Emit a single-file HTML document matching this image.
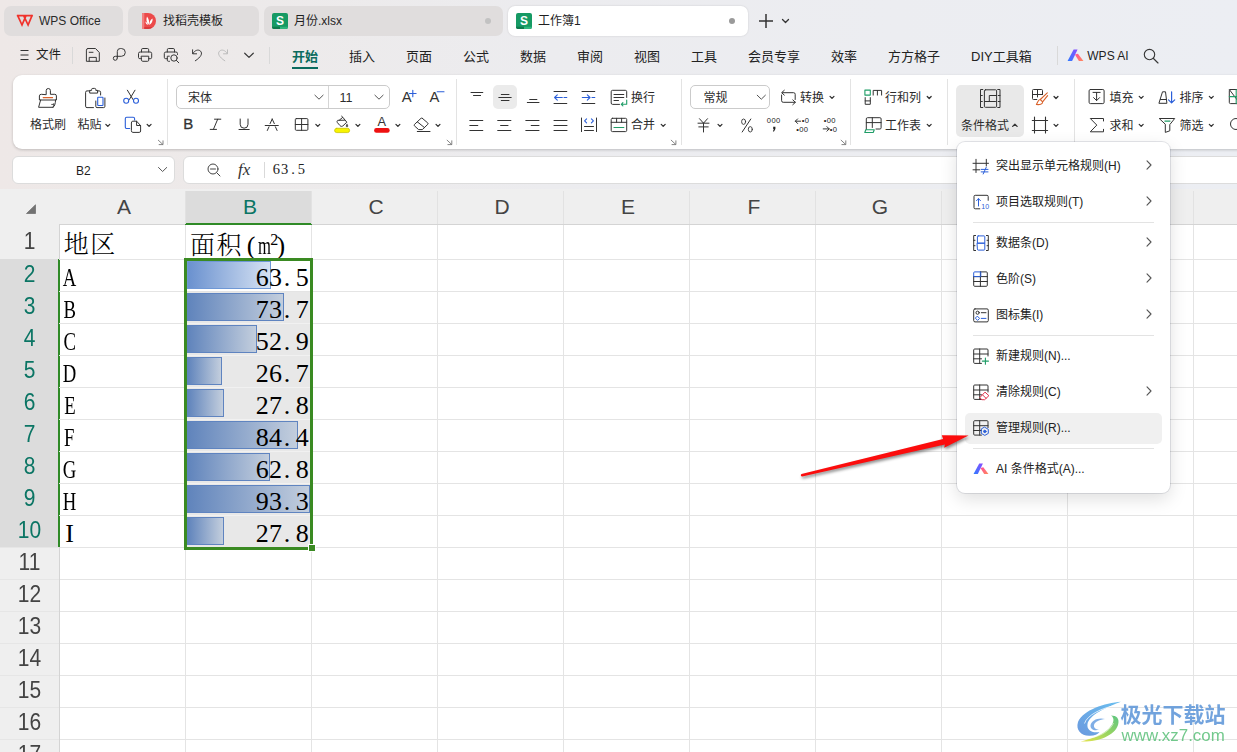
<!DOCTYPE html>
<html lang="zh"><head><meta charset="utf-8"><title>WPS</title>
<style>
html,body{margin:0;padding:0}
body{width:1237px;height:752px;overflow:hidden;position:relative;background:#f0eeee;font-family:"Liberation Sans","Noto Sans CJK SC",sans-serif;font-size:12px;color:#1f1f1f}
div,span,svg{position:absolute;box-sizing:border-box}
.t{white-space:nowrap;line-height:1}
svg{overflow:visible}
.tab{top:6px;height:30px;border-radius:7px;background:#e0dddd}
.sep{width:1px;background:#d9d9d9}
.ic{fill:none;stroke:#383838;stroke-width:1;stroke-linecap:round;stroke-linejoin:round}
.mt{top:49.800px;font-size:13px;color:#222}
.rl{font-size:12px;color:#2b2b2b}
.hd{font-size:21px;color:#505050;text-align:center}
.cell{font-family:"Liberation Serif","Noto Serif CJK SC",serif;font-size:26.500px;font-weight:300;color:#000;white-space:nowrap;line-height:1}
.d{position:static;display:inline-flex;justify-content:center;width:13.330px;font-size:26px;font-weight:400}
.nl{position:static;display:inline-block;transform:scaleX(.72)}
.mi{font-size:12px;color:#222;left:39px}
</style></head><body>
<div style="left:0;top:0;width:1237px;height:192px;background:linear-gradient(90deg,#eee8e7 0,#edeaea 250px,#ececef 550px,#eceef3 100%)"></div>
<div class="tab" style="left:4px;width:119px"></div><div class="tab" style="left:128px;width:131px"></div><div class="tab" style="left:264px;width:239px"></div><div class="tab" style="left:508px;width:240px;background:#fff;box-shadow:0 0 2px rgba(0,0,0,.15)"></div>
<svg style="left:0;top:0" width="40" height="40"><path d="M17.700 15.700 H32 M17.700 15.700 L22 25 L25.700 16.300 M24 16.300 L28.100 25 L32 15.700" fill="none" stroke="#f0322b" stroke-width="1.700" stroke-linejoin="miter" stroke-linecap="square"/></svg><span class="t" style="left:39px;top:14.800px;font-size:12px;color:#2a2a2a">WPS Office</span>
<svg style="left:142px;top:13px" width="14" height="16" viewBox="0 0 14 16"><path d="M1 0 H6 A8 8 0 0 1 14 8 A8 8 0 0 1 6 16 H0 V1 A1 1 0 0 1 1 0Z" fill="#ec4a4a"/><path d="M0 1 A1 1 0 0 1 1 0 H2.300 V16 H0Z" fill="#f27f7e"/><path d="M2.300 14 H10.500 C9.500 15.200 7.800 16 6 16 H2.300Z" fill="#d93a3c"/><path d="M6.600 11.800 C4.200 9.500 4 6.500 5 3.600 C7 6 7.600 9 6.600 11.800Z M7.300 12 C7.300 9 8.500 6.600 10.600 5.600 C10.800 8.400 9.800 10.800 7.300 12Z M5.900 12 C4.500 11.600 3.600 10.300 3.400 8.600 C4.600 9.200 5.600 10.400 5.900 12Z" fill="#fff"/></svg><span class="t" style="left:163px;top:14.800px;font-size:12px">找稻壳模板</span>
<svg style="left:272px;top:13px" width="16" height="16" viewBox="0 0 16 16"><rect x="0" y="0" width="16" height="16" rx="2" fill="#169a64"/><path d="M0 13.700 H8 V16 H2 A2 2 0 0 1 0 14Z" fill="#0d7a4c"/><path d="M8 13.700 H16 V14 A2 2 0 0 1 14 16 H8Z" fill="#2fb57c"/><text x="8" y="12" font-family="Liberation Sans,sans-serif" font-weight="bold" font-size="12" fill="#fff" text-anchor="middle">S</text></svg><span class="t" style="left:294px;top:14.800px;font-size:12px">月份.xlsx</span><div style="left:485px;top:18px;width:6px;height:6px;border-radius:3px;background:#c2c2c2"></div>
<svg style="left:516px;top:13px" width="16" height="16" viewBox="0 0 16 16"><rect x="0" y="0" width="16" height="16" rx="2" fill="#169a64"/><path d="M0 13.700 H8 V16 H2 A2 2 0 0 1 0 14Z" fill="#0d7a4c"/><path d="M8 13.700 H16 V14 A2 2 0 0 1 14 16 H8Z" fill="#2fb57c"/><text x="8" y="12" font-family="Liberation Sans,sans-serif" font-weight="bold" font-size="12" fill="#fff" text-anchor="middle">S</text></svg><span class="t" style="left:538px;top:14.800px;font-size:12px">工作簿1</span><div style="left:729px;top:18px;width:6px;height:6px;border-radius:3px;background:#9a9a9a"></div>
<svg style="left:758px;top:13px" width="16" height="16"><path d="M8 1 V15 M1 8 H15" stroke="#333" stroke-width="1.5" fill="none"/></svg><svg style="left:782px;top:19px" width="7" height="4.5"><path d="M0.5 0.5 L3.5 3.5 L6.5 0.5" fill="none" stroke="#333" stroke-width="1.3" stroke-linecap="round" stroke-linejoin="round"/></svg>
<svg style="left:20px;top:49px" width="11" height="12"><path d="M0.5 1.5 H8.5 M0.5 6 H8.5 M0.5 10.5 H8.5" stroke="#333" stroke-width="1.1" fill="none"/></svg><span class="t" style="left:36px;top:49px;font-size:12.5px">文件</span><div class="sep" style="left:72px;top:47px;height:17px"></div>
<svg class="ic" style="left:0;top:40px" width="270" height="32" viewBox="0 40 270 32"><path d="M88 48.500 H95.500 L99.300 52.500 V61.300 H86.400 V50.100 A1.600 1.600 0 0 1 88 48.500 Z M89.200 52.300 H93 M89.200 61.300 V57.400 H96.300 V61.300"/><path d="M117.300 58 V51.600 A3.100 3.100 0 0 1 120.400 48.500 H121.400 A3.900 3.900 0 0 1 121.400 56.300 H117.300 M117.300 58 A2 2 0 1 1 115.300 56.300 H117.300"/><path d="M141.500 52 V49.800 A1.300 1.300 0 0 1 142.800 48.500 H147.400 A1.300 1.300 0 0 1 148.700 49.800 V52 M141.500 58.700 H139.900 A1.400 1.400 0 0 1 138.500 57.300 V53.600 A1.600 1.600 0 0 1 140.100 52 H150.100 A1.600 1.600 0 0 1 151.700 53.600 V57.300 A1.400 1.400 0 0 1 150.300 58.700 H148.700 M141.500 56.200 H148.700 V60.200 A1.100 1.100 0 0 1 147.600 61.300 H142.600 A1.100 1.100 0 0 1 141.500 60.200 Z"/><path d="M167.300 52 V49.800 A1.300 1.300 0 0 1 168.600 48.500 H173.200 A1.300 1.300 0 0 1 174.500 49.800 V52 M167.300 58.700 H165.700 A1.400 1.400 0 0 1 164.300 57.300 V53.600 A1.600 1.600 0 0 1 165.900 52 H175.900 A1.600 1.600 0 0 1 177.500 53.600 V54.500 M169.300 56.200 H167.300 V60.200 A1.100 1.100 0 0 0 168.400 61.300 H169.500 M177.200 58 A3.200 3.200 0 1 1 170.800 58 A3.200 3.200 0 1 1 177.200 58 Z M176.400 60.400 L178.800 62.800"/><path d="M192.600 49.800 V53.800 H196.600 M192.900 53.600 C194.500 50.200 198.500 49 200.600 51.200 C202.600 53.400 201.400 56.800 195.300 60.800"/><path d="M227.500 49.800 V53.800 H223.500 M227.200 53.600 C225.600 50.200 221.600 49 219.500 51.200 C217.500 53.400 218.700 56.800 224.800 60.800" stroke="#bdbdbd"/><path d="M244.700 53.200 L249 57.400 L253.300 53.200" stroke-width="1.200"/></svg><div class="sep" style="left:269px;top:47px;height:17px"></div>
<span class="t mt" style="left:292px;color:#0b6b5e;font-weight:bold">开始</span><span class="t mt" style="left:349px">插入</span><span class="t mt" style="left:406px">页面</span><span class="t mt" style="left:463px">公式</span><span class="t mt" style="left:520px">数据</span><span class="t mt" style="left:577px">审阅</span><span class="t mt" style="left:634px">视图</span><span class="t mt" style="left:691px">工具</span><span class="t mt" style="left:748px">会员专享</span><span class="t mt" style="left:831px">效率</span><span class="t mt" style="left:888px">方方格子</span><span class="t mt" style="left:971px">DIY工具箱</span><div style="left:292px;top:67px;width:26px;height:2px;background:#0b6b5e"></div>
<div class="sep" style="left:1057px;top:46px;height:19px"></div><svg style="left:1066.500px;top:48.500px" width="17" height="12.500" viewBox="0 0 18 14" preserveAspectRatio="none"><defs><linearGradient id="aj1" x1="0" y1="1" x2="1" y2="0"><stop offset="0" stop-color="#2f7bff"/><stop offset="1" stop-color="#8a4dff"/></linearGradient><linearGradient id="aj2" x1="0" y1="0" x2="1" y2="1"><stop offset="0" stop-color="#ff4d9a"/><stop offset="1" stop-color="#ff8a5c"/></linearGradient></defs><path d="M7 0.500 H11.200 L5.400 13.500 H0.600 Z" fill="url(#aj1)"/><path d="M8.400 6.200 L11.600 5.200 L17.400 13.500 H12.600 Z" fill="url(#aj2)"/></svg><span class="t" style="left:1087.300px;top:49.500px;font-size:12px">WPS AI</span><svg class="ic" style="left:1142.500px;top:47.500px;stroke-width:1.150" width="16" height="16"><circle cx="6.5" cy="6.5" r="5.2"/><path d="M10.5 10.5 L15 15"/></svg>
<div style="left:13px;top:75px;width:1300px;height:74px;border-radius:9px;background:#fff;box-shadow:0 1px 3px rgba(0,0,0,.2)"></div>
<div class="sep" style="left:167px;top:79px;height:66px;background:#e3e3e3"></div><div class="sep" style="left:456px;top:79px;height:66px;background:#e3e3e3"></div><div class="sep" style="left:681px;top:79px;height:66px;background:#e3e3e3"></div><div class="sep" style="left:850px;top:79px;height:66px;background:#e3e3e3"></div><div class="sep" style="left:947px;top:79px;height:66px;background:#e3e3e3"></div><div class="sep" style="left:1074px;top:79px;height:66px;background:#e3e3e3"></div>
<div style="left:493px;top:85px;width:24px;height:24px;border-radius:5px;background:#ebebeb"></div><div style="left:956px;top:85px;width:68px;height:52px;border-radius:5px;background:#e9e9e9"></div><div style="left:176px;top:85px;width:214px;height:24px;border:1px solid #cbcbcb;border-radius:5px;background:#fff"></div><div class="sep" style="left:328px;top:86px;height:22px;background:#d5d5d5"></div><div style="left:690px;top:85px;width:80px;height:24px;border:1px solid #cbcbcb;border-radius:5px;background:#fff"></div>
<svg style="left:0;top:0" width="1237" height="152" viewBox="0 0 1237 152" stroke-linecap="round" stroke-linejoin="round"><path d="M46.2 94.3 V90.6 A2.1 2.1 0 0 1 50.4 90.6 V94.3 H54.8 A1.6 1.6 0 0 1 56.4 95.9 V100 H39.4 V95.9 A1.6 1.6 0 0 1 41 94.3 Z" stroke="#333" stroke-width="1.0" fill="none"/><path d="M40.6 100 L38.6 107.3 H53 C54.6 106.6 55.4 103.5 55.6 100 M53 107.3 C53.6 106 53.9 105 54 103.8 C53.2 104.4 52.4 104.6 51.8 104.5" stroke="#333" stroke-width="1.0" fill="none"/><path d="M43.2 97.6 H52.6" stroke="#d9622b" stroke-width="1.1" fill="none"/><path d="M89.6 90.9 H87 A1.4 1.4 0 0 0 85.6 92.3 V106.2 A1.4 1.4 0 0 0 87 107.600 H93.5 M97.6 90.9 H99.2 A1.4 1.4 0 0 1 100.6 92.3 V95 M89.7 92.7 V90.4 H91.6 V89.6 A1.2 1.2 0 0 1 92.8 88.4 H94.600 A1.2 1.2 0 0 1 95.8 89.6 V90.4 H97.600 V92.7 Z" stroke="#333" stroke-width="1.0" fill="none"/><path d="M95.8 101 V106.400 A1.2 1.2 0 0 0 97 107.600 H103.7 A1.2 1.2 0 0 0 104.9 106.400 V98" stroke="#333" stroke-width="1.0" fill="none"/><path d="M98.2 97.3 H102.500 A.5 .5 0 0 1 103 97.800 V105 A.5 .5 0 0 1 102.500 105.500 H98.2 A.5 .5 0 0 1 97.700 105 V97.800 A.5 .5 0 0 1 98.2 97.3Z" stroke="#2b5fd9" stroke-width="1.1" fill="none"/><path d="M127.400 90.200 L133 99.500 M135 90.200 L129.400 99.500" stroke="#333" stroke-width="1.0" fill="none"/><path d="M128.700 100.800 A2.500 2.500 0 1 1 123.700 100.800 A2.500 2.500 0 1 1 128.700 100.800 Z M138.500 100.800 A2.500 2.500 0 1 1 133.500 100.800 A2.500 2.500 0 1 1 138.500 100.800 Z" stroke="#2b5fd9" stroke-width="1.1" fill="none"/><path d="M129.700 128.500 H126.700 A1.4 1.4 0 0 1 125.300 127.100 V118.700 A1.4 1.4 0 0 1 126.700 117.300 H133.200 A1.4 1.4 0 0 1 134.600 118.700 V120" stroke="#2b5fd9" stroke-width="1.1" fill="none"/><path d="M131.400 122.600 A1.4 1.4 0 0 1 132.800 121.200 H136.600 L140.600 125.600 V131 A1.4 1.4 0 0 1 139.200 132.400 H132.800 A1.4 1.4 0 0 1 131.400 131 Z M136.600 121.200 V125.500 H140.600" stroke="#333" stroke-width="1.0" fill="none"/><path d="M105.85 124.40 L107.80 126.40 L109.75 124.40" stroke="#333" stroke-width="1.3" fill="none"/><path d="M147.15 124.40 L149.10 126.40 L151.05 124.40" stroke="#333" stroke-width="1.3" fill="none"/><path d="M158.3 140.2 L162.8 144.39999999999998 M163.0 140.79999999999998 V144.6 H159.10000000000002" stroke="#777" stroke-width="0.9" fill="none"/><path d="M314.9 95.2 L319.0 99.2 L323.09999999999997 95.2" stroke="#555" stroke-width="1.0" fill="none"/><path d="M374.9 95.2 L379.0 99.2 L383.09999999999997 95.2" stroke="#555" stroke-width="1.0" fill="none"/><path d="M412.800 90.3 V96.700 M409.500 93.500 H416.100" stroke="#2b5fd9" stroke-width="1.1" fill="none"/><path d="M437.200 91.800 H444" stroke="#2b5fd9" stroke-width="1.1" fill="none"/><path d="M214.500 119.2 H220.800 M210.200 129.400 H216.500 M217.700 119.2 L213.400 129.400" stroke="#333" stroke-width="1.0" fill="none"/><path d="M240.200 119 V124.300 A3.9 3.9 0 0 0 248 124.300 V119 M239 129.500 H249.200" stroke="#333" stroke-width="1.0" fill="none"/><path d="M272.2 119 L270.100 123.600 M272.2 119 L274.300 123.600 M265.2 125.500 H278.300 M269 126.800 L267.300 130.500 M275.400 126.800 L277.100 130.500" stroke="#333" stroke-width="1.0" fill="none"/><path d="M296.300 118.600 H306.900 A1 1 0 0 1 307.900 119.600 V129.300 A1 1 0 0 1 306.900 130.300 H296.300 A1 1 0 0 1 295.300 129.300 V119.600 A1 1 0 0 1 296.300 118.600 Z M301.600 118.600 V130.300 M295.300 124.500 H307.900" stroke="#333" stroke-width="1.0" fill="none"/><path d="M315.85 124.40 L317.80 126.40 L319.75 124.40" stroke="#333" stroke-width="1.3" fill="none"/><path d="M339.500 120 L342.800 117.300 L346.800 122.200 L343 125.800 C342 126.600 340.800 126.600 340 125.600 L337.400 122.600 C336.800 121.700 337 120.800 337.800 120.300 L344.500 120.200 M342.800 117.300 L341.600 116.200" stroke="#333" stroke-width="1.0" fill="none"/><path d="M347 124.300 C347.600 125.200 347.800 125.700 347.800 126.100 A.8 .8 0 0 1 346.200 126.100 C346.200 125.700 346.400 125.200 347 124.300Z" stroke="#333" stroke-width="0.5" fill="#333"/><rect x="334.600" y="128.300" width="15" height="4.300" rx="2.15" fill="#f8f400" stroke="#c9c400" stroke-width=".8"/><path d="M355.95 124.40 L357.90 126.40 L359.85 124.40" stroke="#333" stroke-width="1.3" fill="none"/><rect x="374.100" y="128.100" width="15.600" height="4.600" rx="2.3" fill="#ee1111"/><path d="M395.95 124.40 L397.90 126.40 L399.85 124.40" stroke="#333" stroke-width="1.3" fill="none"/><path d="M422.300 118.300 L427.800 123 C428.200 123.400 428.200 123.900 427.800 124.300 L422.300 129.600 H418.600 L414.400 125.800 C414 125.400 414 124.900 414.400 124.500 L421 118.300 C421.400 118 421.900 118 422.300 118.300 Z M417.300 121.800 L424.500 127.600 M417.300 131.500 H430" stroke="#333" stroke-width="1.0" fill="none"/><path d="M436.05 124.40 L438.00 126.40 L439.95 124.40" stroke="#333" stroke-width="1.3" fill="none"/><path d="M447.1 140.2 L451.6 144.39999999999998 M451.8 140.79999999999998 V144.6 H447.90000000000003" stroke="#777" stroke-width="0.9" fill="none"/><path d="M471 92.500 H482.800 M473.500 95.500 H480.600" stroke="#333" stroke-width="1.0" fill="none"/><path d="M501.300 94.500 H509 M498.800 97.500 H511.200 M501.300 100.500 H509" stroke="#333" stroke-width="1.0" fill="none"/><path d="M529.700 99.500 H536.900 M527.300 102.500 H539" stroke="#333" stroke-width="1.0" fill="none"/><path d="M554 91.500 H566.800 M554 103.500 H566.800" stroke="#333" stroke-width="1.0" fill="none"/><path d="M554.600 97.500 H562.300 M557.300 94.800 L554.600 97.500 L557.300 100.200 M564 97.500 H566.800" stroke="#2b5fd9" stroke-width="1.1" fill="none"/><path d="M582 91.500 H594.800 M582 103.500 H594.800" stroke="#333" stroke-width="1.0" fill="none"/><path d="M582.300 97.500 H590 M587.300 94.800 L590 97.500 L587.300 100.200 M592 97.500 H594.800" stroke="#2b5fd9" stroke-width="1.1" fill="none"/><path d="M619.500 104.400 H612.600 A1.4 1.4 0 0 1 611.200 103 V91.700 A1.4 1.4 0 0 1 612.600 90.300 H625.300 A1.4 1.4 0 0 1 626.700 91.700 V97.500 M614 94.500 H623.800 M614 97.500 H623.800 M614 100.500 H618.500" stroke="#333" stroke-width="1.0" fill="none"/><path d="M626.700 100 V104.300 H621.300 M622.900 102.700 L621.300 104.300 L622.900 105.900" stroke="#1f9d67" stroke-width="1.1" fill="none"/><path d="M469.800 120.500 H482.800 M469.800 125.500 H477.800 M469.800 130.500 H482.800" stroke="#333" stroke-width="1.0" fill="none"/><path d="M497.700 120.500 H510.900 M500.600 125.500 H508 M497.700 130.500 H510.900" stroke="#333" stroke-width="1.0" fill="none"/><path d="M525.800 120.500 H539 M531.200 125.500 H539 M525.800 130.500 H539" stroke="#333" stroke-width="1.0" fill="none"/><path d="M554 120.500 H567 M554 125.500 H567 M554 130.500 H567" stroke="#333" stroke-width="1.0" fill="none"/><path d="M581.500 118 V131.600 M596.500 118 V131.600 M584.500 126.500 H593.500 M584.500 130.500 H593.500" stroke="#333" stroke-width="1.0" fill="none"/><path d="M586.600 118.800 L584.600 120.800 L586.600 122.800 M591.400 118.800 L593.400 120.800 L591.400 122.800" stroke="#2b5fd9" stroke-width="1.1" fill="none"/><path d="M612.400 118.300 H625.500 A1.2 1.2 0 0 1 626.700 119.500 V130.400 A1.2 1.2 0 0 1 625.500 131.600 H612.400 A1.2 1.2 0 0 1 611.200 130.400 V119.500 A1.2 1.2 0 0 1 612.400 118.300 Z M611.200 122.300 H626.700 M616.600 118.300 V122.300 M621.600 118.300 V122.300" stroke="#333" stroke-width="1.0" fill="none"/><path d="M614 127.500 H623.800" stroke="#1f9d67" stroke-width="1.2" fill="none"/><path d="M661.25 124.40 L663.20 126.40 L665.15 124.40" stroke="#333" stroke-width="1.3" fill="none"/><path d="M671.2 140.2 L675.7 144.39999999999998 M675.9000000000001 140.79999999999998 V144.6 H672.0" stroke="#777" stroke-width="0.9" fill="none"/><path d="M757.2 95.2 L761.3000000000001 99.2 L765.4000000000001 95.2" stroke="#555" stroke-width="1.0" fill="none"/><path d="M782.500 92.700 H793.600 A1.6 1.6 0 0 1 795.200 94.300 V99.500 M784.300 90.300 L781.600 92.700 L784.300 95.100 M781.600 95 V100.700 A1.6 1.6 0 0 0 783.200 102.300 H795.200 M792.800 99.900 L795.400 102.300 L792.800 104.700" stroke="#333" stroke-width="1.0" fill="none"/><path d="M830.05 96.40 L832.00 98.40 L833.95 96.40" stroke="#333" stroke-width="1.3" fill="none"/><path d="M699.500 118.700 L703.500 123.200 L707.500 118.700 M698 123.200 H709 M698.800 126.900 H708.200 M703.500 123.200 V132" stroke="#333" stroke-width="1.0" fill="none"/><path d="M718.05 124.40 L720.00 126.40 L721.95 124.40" stroke="#333" stroke-width="1.3" fill="none"/><path d="M750.800 119 L742.200 132" stroke="#333" stroke-width="1.0" fill="none"/><path d="M745.600 121.700 A2 2.700 0 1 1 741.600 121.700 A2 2.700 0 1 1 745.600 121.700 Z M752.300 129.300 A2 2.700 0 1 1 748.300 129.300 A2 2.700 0 1 1 752.300 129.300 Z" stroke="#333" stroke-width="0.9" fill="none"/><path d="M795.300 121.200 H800.600 M797.600 118.900 L795.300 121.200 L797.600 123.500" stroke="#333" stroke-width="1.0" fill="none"/><path d="M823.200 128.900 H829.200 M826.900 126.600 L829.200 128.900 L826.900 131.200" stroke="#333" stroke-width="1.0" fill="none"/><path d="M841.1 140.2 L845.6 144.39999999999998 M845.8000000000001 140.79999999999998 V144.6 H841.9" stroke="#777" stroke-width="0.9" fill="none"/><path d="M864.900 90.100 H870.300 V95.100 H864.900 Z" stroke="#1f9d67" stroke-width="1.1" fill="none"/><path d="M873.200 95.100 V90.400 H881.600 V95.100 M877.400 90.400 V95.100" stroke="#333" stroke-width="1.0" fill="none"/><path d="M865.200 97.600 V104.300 H870.300 V97.600 M865.200 100.900 H870.300" stroke="#333" stroke-width="1.0" fill="none"/><path d="M927.25 96.50 L929.20 98.50 L931.15 96.50" stroke="#333" stroke-width="1.3" fill="none"/><path d="M866.300 129.500 V118.900 A1.2 1.2 0 0 1 867.500 117.700 H879.900 A1.2 1.2 0 0 1 881.100 118.900 V127.800 A1.2 1.2 0 0 1 879.900 129 H876 M866.300 122.600 H881.100 M872.300 117.700 V127.500" stroke="#333" stroke-width="1.0" fill="none"/><path d="M865.800 129.700 H874.300 L873.200 132.500 H864.800 Z" stroke="#1f9d67" stroke-width="1.1" fill="none"/><path d="M927.25 124.40 L929.20 126.40 L931.15 124.40" stroke="#333" stroke-width="1.3" fill="none"/><path d="M982.800 89.500 H980.500 V107.500 H982.800 M997.700 89.500 H1000 V107.500 H997.700 M980.500 95.500 H982.300 M980.500 101.500 H982.300 M998.200 95.500 H1000 M998.200 101.500 H1000" stroke="#333" stroke-width="1.0" fill="none"/><path d="M985.400 89.800 H995.600 A1 1 0 0 1 996.600 90.800 V106.300 A1 1 0 0 1 995.600 107.300 H985.400 A1 1 0 0 1 984.400 106.300 V90.800 A1 1 0 0 1 985.400 89.800 Z M996.600 95.500 H989.300 V101.500 M984.400 101.500 H995.500" stroke="#333" stroke-width="1.0" fill="none"/><path d="M1012.700 126.400 L1014.900 124.300 L1017.100 126.400" stroke="#333" stroke-width="1.3" fill="none"/><path d="M1036.800 99.500 H1033.400 A.9 .9 0 0 1 1032.500 98.600 V90.400 A.9 .9 0 0 1 1033.400 89.500 H1041.600 A.9 .9 0 0 1 1042.500 90.400 V94.500 M1032.500 94.500 H1042.500 M1037.500 89.500 V97" stroke="#333" stroke-width="1.0" fill="none"/><path d="M1047.300 92.800 L1040.300 99.500 M1047.600 95.600 L1042.600 101.800 M1040.300 99.500 C1038.300 99.300 1038 101.800 1036.400 104.500 C1039.500 105 1043 104.200 1042.600 101.800 Z" stroke="#d9622b" stroke-width="1.1" fill="none"/><path d="M1054.05 96.50 L1056.00 98.50 L1057.95 96.50" stroke="#333" stroke-width="1.3" fill="none"/><path d="M1034.500 117.100 V132.900 M1045.500 117.100 V132.900 M1032.300 120.500 H1047.600 M1032.300 130.500 H1047.600" stroke="#333" stroke-width="1.1" fill="none"/><path d="M1054.05 124.40 L1056.00 126.40 L1057.95 124.40" stroke="#333" stroke-width="1.3" fill="none"/><path d="M1090.400 89.500 H1102.800 A1.3 1.3 0 0 1 1104.100 90.800 V102.300 A1.3 1.3 0 0 1 1102.800 103.600 H1090.400 A1.3 1.3 0 0 1 1089.100 102.300 V90.800 A1.3 1.3 0 0 1 1090.400 89.500 Z M1093 92.400 H1100.200 M1096.600 92.400 V100.500 M1093.600 97.600 L1096.600 100.600 L1099.600 97.600" stroke="#333" stroke-width="1.0" fill="none"/><path d="M1139.25 96.40 L1141.20 98.40 L1143.15 96.40" stroke="#333" stroke-width="1.3" fill="none"/><path d="M1162.900 91.800 H1165.500 L1166.900 103.300 H1159.300 Z M1160.500 99.500 H1166.300" stroke="#333" stroke-width="1.0" fill="none"/><path d="M1171.600 91.800 V102.600 M1168.500 99.800 L1171.600 102.900 L1174.700 99.800" stroke="#2b5fd9" stroke-width="1.2" fill="none"/><path d="M1209.35 96.40 L1211.30 98.40 L1213.25 96.40" stroke="#333" stroke-width="1.3" fill="none"/><path d="M1230.500 89.500 H1240 V103.600 H1230.500 A1.2 1.2 0 0 1 1229.300 102.400 V90.700 A1.2 1.2 0 0 1 1230.500 89.500 Z M1229.300 89.500 L1240 103.600" stroke="#333" stroke-width="1.0" fill="none"/><path d="M1229.300 96.600 H1240 M1236.200 89.500 V103.600" stroke="#1f9d67" stroke-width="1.1" fill="none"/><path d="M1103.500 121 V118.500 H1090.300 L1096.800 125.100 L1090.300 131.800 H1103.500 V129.300" stroke="#333" stroke-width="1.0" fill="none"/><path d="M1139.25 124.40 L1141.20 126.40 L1143.15 124.40" stroke="#333" stroke-width="1.3" fill="none"/><path d="M1159.600 118.500 H1174.700 L1169.800 124.600 V130.800 L1165.300 132.400 V124.600 Z" stroke="#333" stroke-width="1.0" fill="none"/><path d="M1164.900 121.100 H1170" stroke="#1f9d67" stroke-width="1.2" fill="none"/><path d="M1209.35 124.40 L1211.30 126.40 L1213.25 124.40" stroke="#333" stroke-width="1.3" fill="none"/><path d="M1241.500 124 A5.500 5.500 0 1 1 1230.500 124 A5.500 5.500 0 1 1 1241.500 124 Z" stroke="#333" stroke-width="1.0" fill="none"/></svg>
<span class="t rl" style="left:30px;top:119px;">格式刷</span><span class="t rl" style="left:77.5px;top:119px;">粘贴</span><span class="t rl" style="left:188px;top:92px;">宋体</span><span class="t rl" style="left:339.5px;top:91.5px;font-size:12.5px">11</span><span class="t" style="left:401.800px;top:89.600px;font-size:14.800px;color:#333">A</span><span class="t" style="left:429.600px;top:89.600px;font-size:14.800px;color:#333">A</span><span class="t" style="left:183.300px;top:116.200px;font-size:15px;color:#333;-webkit-text-stroke:.3px #333">B</span><span class="t" style="left:377.600px;top:115.600px;font-size:12.800px;color:#333">A</span><span class="t rl" style="left:631px;top:92px;">换行</span><span class="t rl" style="left:631px;top:119px;">合并</span><span class="t rl" style="left:703.5px;top:92px;">常规</span><span class="t rl" style="left:800px;top:92px;">转换</span><span class="t" style="left:766.800px;top:117.200px;font-size:7.600px;color:#222;letter-spacing:.4px">000</span><svg style="left:772px;top:126px" width="5" height="7"><path d="M1.2 0.800 H3.400 V3 L2 5.600 H0.900 L1.800 3 H1.2Z" fill="#222"/></svg><span class="t" style="left:801.800px;top:117.300px;font-size:7.600px;color:#222;letter-spacing:.3px">&#8226;0</span><span class="t" style="left:796.300px;top:125.600px;font-size:7.600px;color:#222;letter-spacing:.3px">&#8226;00</span><span class="t" style="left:823.800px;top:117.300px;font-size:7.600px;color:#222;letter-spacing:.3px">&#8226;00</span><span class="t" style="left:829.700px;top:125.600px;font-size:7.600px;color:#222;letter-spacing:.3px">&#8226;0</span><span class="t rl" style="left:885px;top:92px;">行和列</span><span class="t rl" style="left:885px;top:119.5px;">工作表</span><span class="t rl" style="left:961px;top:119.5px;">条件格式</span><span class="t rl" style="left:1109.5px;top:92px;">填充</span><span class="t rl" style="left:1179.5px;top:92px;">排序</span><span class="t rl" style="left:1109.5px;top:119.5px;">求和</span><span class="t rl" style="left:1179.5px;top:119.5px;">筛选</span>
<div style="left:12px;top:156px;width:162.500px;height:28px;border-radius:6px;background:#fff;border:1px solid #dcdcdc"></div><span class="t" style="left:76px;top:164.500px;font-size:12px">B2</span><svg style="left:158px;top:167px" width="10" height="6"><path d="M0.500 0.500 L4.600 4.500 L8.700 0.500" fill="none" stroke="#555" stroke-width="1" stroke-linecap="round" stroke-linejoin="round"/></svg><div style="left:183px;top:156px;width:1100px;height:28px;border-radius:6px;background:#fff;border:1px solid #dcdcdc"></div><svg class="ic" style="left:207px;top:163px;stroke:#444" width="15" height="15"><circle cx="6" cy="6" r="5"/><path d="M3.500 6 H8.500 M9.800 9.800 L13 13"/></svg><span class="t" style="left:238px;top:161px;font-size:17px;font-style:italic;font-family:'Liberation Serif',serif;color:#333">fx</span><div class="sep" style="left:264px;top:162px;height:16px;background:#d9d9d9"></div><span class="t" style="left:272.200px;top:162.300px;font-size:14.500px;font-family:'Liberation Serif',serif;color:#222"><span class="d" style="width:8.350px;font-size:14.500px">6</span><span class="d" style="width:8.350px;font-size:14.500px">3</span><span class="d" style="width:8.350px;font-size:14.500px">.</span><span class="d" style="width:8.350px;font-size:14.500px">5</span></span>
<div style="left:0;top:191px;width:1237px;height:561px;background:#fff"></div><div style="left:0;top:189px;width:1237px;height:35px;background:#efefef"></div><div style="left:0;top:189px;width:59px;height:563px;background:#efefef"></div><div style="left:185px;top:191px;width:127px;height:34px;background:#dcdcdc;border-bottom:2px solid #2f8a27"></div><div style="left:0;top:259px;width:60px;height:288px;background:#dcdcdc;border-right:2px solid #2f8a27"></div><svg style="left:26px;top:204px" width="10" height="10"><path d="M0.500 9.500 H9.500 V0.800 Z" fill="#727272" stroke="#727272" stroke-width=".8" stroke-linejoin="round"/></svg><span class="t hd" style="left:61px;top:196.200px;width:126px;color:#444">A</span><span class="t hd" style="left:187px;top:196.200px;width:126px;color:#0b7564">B</span><span class="t hd" style="left:313px;top:196.200px;width:126px;color:#444">C</span><span class="t hd" style="left:439px;top:196.200px;width:126px;color:#444">D</span><span class="t hd" style="left:565px;top:196.200px;width:126px;color:#444">E</span><span class="t hd" style="left:691px;top:196.200px;width:126px;color:#444">F</span><span class="t hd" style="left:817px;top:196.200px;width:126px;color:#444">G</span><span class="t hd" style="left:943px;top:196.200px;width:126px;color:#444">H</span><span class="t hd" style="left:1069px;top:196.200px;width:126px;color:#444">I</span><span class="t hd" style="left:1195px;top:196.200px;width:126px;color:#444">J</span>
<div style="left:59px;top:259px;width:1178px;height:1px;background:#e4e4e4"></div><div style="left:59px;top:291px;width:1178px;height:1px;background:#e4e4e4"></div><div style="left:59px;top:323px;width:1178px;height:1px;background:#e4e4e4"></div><div style="left:59px;top:355px;width:1178px;height:1px;background:#e4e4e4"></div><div style="left:59px;top:387px;width:1178px;height:1px;background:#e4e4e4"></div><div style="left:59px;top:419px;width:1178px;height:1px;background:#e4e4e4"></div><div style="left:59px;top:451px;width:1178px;height:1px;background:#e4e4e4"></div><div style="left:59px;top:483px;width:1178px;height:1px;background:#e4e4e4"></div><div style="left:59px;top:515px;width:1178px;height:1px;background:#e4e4e4"></div><div style="left:59px;top:547px;width:1178px;height:1px;background:#e4e4e4"></div><div style="left:59px;top:579px;width:1178px;height:1px;background:#e4e4e4"></div><div style="left:59px;top:611px;width:1178px;height:1px;background:#e4e4e4"></div><div style="left:59px;top:643px;width:1178px;height:1px;background:#e4e4e4"></div><div style="left:59px;top:675px;width:1178px;height:1px;background:#e4e4e4"></div><div style="left:59px;top:707px;width:1178px;height:1px;background:#e4e4e4"></div><div style="left:59px;top:739px;width:1178px;height:1px;background:#e4e4e4"></div><div style="left:59px;top:771px;width:1178px;height:1px;background:#e4e4e4"></div><div style="left:185px;top:225px;width:1px;height:527px;background:#e4e4e4"></div><div style="left:311px;top:225px;width:1px;height:527px;background:#e4e4e4"></div><div style="left:437px;top:225px;width:1px;height:527px;background:#e4e4e4"></div><div style="left:563px;top:225px;width:1px;height:527px;background:#e4e4e4"></div><div style="left:689px;top:225px;width:1px;height:527px;background:#e4e4e4"></div><div style="left:815px;top:225px;width:1px;height:527px;background:#e4e4e4"></div><div style="left:941px;top:225px;width:1px;height:527px;background:#e4e4e4"></div><div style="left:1067px;top:225px;width:1px;height:527px;background:#e4e4e4"></div><div style="left:1193px;top:225px;width:1px;height:527px;background:#e4e4e4"></div><div style="left:1319px;top:225px;width:1px;height:527px;background:#e4e4e4"></div><div style="left:185px;top:191px;width:1px;height:33px;background:#e2e2e2"></div><div style="left:311px;top:191px;width:1px;height:33px;background:#e2e2e2"></div><div style="left:437px;top:191px;width:1px;height:33px;background:#e2e2e2"></div><div style="left:563px;top:191px;width:1px;height:33px;background:#e2e2e2"></div><div style="left:689px;top:191px;width:1px;height:33px;background:#e2e2e2"></div><div style="left:815px;top:191px;width:1px;height:33px;background:#e2e2e2"></div><div style="left:941px;top:191px;width:1px;height:33px;background:#e2e2e2"></div><div style="left:1067px;top:191px;width:1px;height:33px;background:#e2e2e2"></div><div style="left:1193px;top:191px;width:1px;height:33px;background:#e2e2e2"></div><div style="left:1319px;top:191px;width:1px;height:33px;background:#e2e2e2"></div><div style="left:0;top:547px;width:59px;height:1px;background:#e6e6e6"></div><div style="left:0;top:579px;width:59px;height:1px;background:#e6e6e6"></div><div style="left:0;top:611px;width:59px;height:1px;background:#e6e6e6"></div><div style="left:0;top:643px;width:59px;height:1px;background:#e6e6e6"></div><div style="left:0;top:675px;width:59px;height:1px;background:#e6e6e6"></div><div style="left:0;top:707px;width:59px;height:1px;background:#e6e6e6"></div><div style="left:0;top:739px;width:59px;height:1px;background:#e6e6e6"></div><div style="left:0;top:771px;width:59px;height:1px;background:#e6e6e6"></div><div style="left:59px;top:224px;width:126px;height:1px;background:#d4d4d4"></div><div style="left:312px;top:224px;width:925px;height:1px;background:#d4d4d4"></div><div style="left:59px;top:225px;width:1px;height:34px;background:#d4d4d4"></div><div style="left:59px;top:547px;width:1px;height:205px;background:#d4d4d4"></div>
<span class="t hd" style="left:0;top:230.5px;width:59px;color:#444;transform:scaleY(1.1);transform-origin:50% 88%">1</span><span class="t hd" style="left:0;top:263.5px;width:59px;color:#0b7564;transform:scaleY(1.1);transform-origin:50% 88%">2</span><span class="t hd" style="left:0;top:295.5px;width:59px;color:#0b7564;transform:scaleY(1.1);transform-origin:50% 88%">3</span><span class="t hd" style="left:0;top:327.5px;width:59px;color:#0b7564;transform:scaleY(1.1);transform-origin:50% 88%">4</span><span class="t hd" style="left:0;top:359.5px;width:59px;color:#0b7564;transform:scaleY(1.1);transform-origin:50% 88%">5</span><span class="t hd" style="left:0;top:391.5px;width:59px;color:#0b7564;transform:scaleY(1.1);transform-origin:50% 88%">6</span><span class="t hd" style="left:0;top:423.5px;width:59px;color:#0b7564;transform:scaleY(1.1);transform-origin:50% 88%">7</span><span class="t hd" style="left:0;top:455.5px;width:59px;color:#0b7564;transform:scaleY(1.1);transform-origin:50% 88%">8</span><span class="t hd" style="left:0;top:487.5px;width:59px;color:#0b7564;transform:scaleY(1.1);transform-origin:50% 88%">9</span><span class="t hd" style="left:0;top:519.5px;width:59px;color:#0b7564;transform:scaleY(1.1);transform-origin:50% 88%">10</span><span class="t hd" style="left:0;top:551.5px;width:59px;color:#444;transform:scaleY(1.1);transform-origin:50% 88%">11</span><span class="t hd" style="left:0;top:583.5px;width:59px;color:#444;transform:scaleY(1.1);transform-origin:50% 88%">12</span><span class="t hd" style="left:0;top:615.5px;width:59px;color:#444;transform:scaleY(1.1);transform-origin:50% 88%">13</span><span class="t hd" style="left:0;top:647.5px;width:59px;color:#444;transform:scaleY(1.1);transform-origin:50% 88%">14</span><span class="t hd" style="left:0;top:679.5px;width:59px;color:#444;transform:scaleY(1.1);transform-origin:50% 88%">15</span><span class="t hd" style="left:0;top:711.5px;width:59px;color:#444;transform:scaleY(1.1);transform-origin:50% 88%">16</span><span class="t hd" style="left:0;top:743.5px;width:59px;color:#444;transform:scaleY(1.1);transform-origin:50% 88%">17</span>
<div style="left:186px;top:292px;width:125px;height:255px;background:#e8e8e8"></div><div style="left:186px;top:323px;width:125px;height:1px;background:#f1f1f1"></div><div style="left:186px;top:355px;width:125px;height:1px;background:#f1f1f1"></div><div style="left:186px;top:387px;width:125px;height:1px;background:#f1f1f1"></div><div style="left:186px;top:419px;width:125px;height:1px;background:#f1f1f1"></div><div style="left:186px;top:451px;width:125px;height:1px;background:#f1f1f1"></div><div style="left:186px;top:483px;width:125px;height:1px;background:#f1f1f1"></div><div style="left:186px;top:515px;width:125px;height:1px;background:#f1f1f1"></div><div style="left:187px;top:261px;width:84px;height:28px;background:linear-gradient(90deg,#6a91cf 0,#d6e2f3 100%);border:1px solid #6f98d6"></div><div style="left:187px;top:293px;width:97px;height:28px;background:linear-gradient(90deg,#6084bc 0,#c3ceDD 100%);border:1px solid #5f84c0"></div><div style="left:187px;top:325px;width:70px;height:28px;background:linear-gradient(90deg,#6084bc 0,#c3ceDD 100%);border:1px solid #5f84c0"></div><div style="left:187px;top:357px;width:35px;height:28px;background:linear-gradient(90deg,#6084bc 0,#c3ceDD 100%);border:1px solid #5f84c0"></div><div style="left:187px;top:389px;width:37px;height:28px;background:linear-gradient(90deg,#6084bc 0,#c3ceDD 100%);border:1px solid #5f84c0"></div><div style="left:187px;top:421px;width:111px;height:28px;background:linear-gradient(90deg,#6084bc 0,#c3ceDD 100%);border:1px solid #5f84c0"></div><div style="left:187px;top:453px;width:83px;height:28px;background:linear-gradient(90deg,#6084bc 0,#c3ceDD 100%);border:1px solid #5f84c0"></div><div style="left:187px;top:485px;width:123px;height:28px;background:linear-gradient(90deg,#6084bc 0,#c3ceDD 100%);border:1px solid #5f84c0"></div><div style="left:187px;top:517px;width:37px;height:28px;background:linear-gradient(90deg,#6084bc 0,#c3ceDD 100%);border:1px solid #5f84c0"></div>
<span class="cell" style="left:63.700px;top:231.500px;font-size:25px;letter-spacing:1.600px">地区</span><span class="cell" style="left:190px;top:233px;font-size:25px;letter-spacing:1.600px">面积<span class="d" style="margin-left:2px">(</span><span class="d"><span class="nl" style="transform:scaleX(.64)">m</span></span><span class="d" style="font-size:16px;width:6.500px;position:relative;top:-9.500px">2</span><span class="d" style="margin-left:-3.500px">)</span></span><span class="cell" style="left:63px;top:264px"><span class="d"><span class="nl">A</span></span></span><span class="cell" style="left:255.500px;top:264px"><span class="d">6</span><span class="d">3</span><span class="d" style="justify-content:flex-start;padding-left:1.500px">.</span><span class="d">5</span></span><span class="cell" style="left:63px;top:296px"><span class="d"><span class="nl">B</span></span></span><span class="cell" style="left:255.500px;top:296px"><span class="d">7</span><span class="d">3</span><span class="d" style="justify-content:flex-start;padding-left:1.500px">.</span><span class="d">7</span></span><span class="cell" style="left:63px;top:328px"><span class="d"><span class="nl">C</span></span></span><span class="cell" style="left:255.500px;top:328px"><span class="d">5</span><span class="d">2</span><span class="d" style="justify-content:flex-start;padding-left:1.500px">.</span><span class="d">9</span></span><span class="cell" style="left:63px;top:360px"><span class="d"><span class="nl">D</span></span></span><span class="cell" style="left:255.500px;top:360px"><span class="d">2</span><span class="d">6</span><span class="d" style="justify-content:flex-start;padding-left:1.500px">.</span><span class="d">7</span></span><span class="cell" style="left:63px;top:392px"><span class="d"><span class="nl">E</span></span></span><span class="cell" style="left:255.500px;top:392px"><span class="d">2</span><span class="d">7</span><span class="d" style="justify-content:flex-start;padding-left:1.500px">.</span><span class="d">8</span></span><span class="cell" style="left:63px;top:424px"><span class="d"><span class="nl">F</span></span></span><span class="cell" style="left:255.500px;top:424px"><span class="d">8</span><span class="d">4</span><span class="d" style="justify-content:flex-start;padding-left:1.500px">.</span><span class="d">4</span></span><span class="cell" style="left:63px;top:456px"><span class="d"><span class="nl">G</span></span></span><span class="cell" style="left:255.500px;top:456px"><span class="d">6</span><span class="d">2</span><span class="d" style="justify-content:flex-start;padding-left:1.500px">.</span><span class="d">8</span></span><span class="cell" style="left:63px;top:488px"><span class="d"><span class="nl">H</span></span></span><span class="cell" style="left:255.500px;top:488px"><span class="d">9</span><span class="d">3</span><span class="d" style="justify-content:flex-start;padding-left:1.500px">.</span><span class="d">3</span></span><span class="cell" style="left:63px;top:520px"><span class="d"><span class="nl" style="transform:none">I</span></span></span><span class="cell" style="left:255.500px;top:520px"><span class="d">2</span><span class="d">7</span><span class="d" style="justify-content:flex-start;padding-left:1.500px">.</span><span class="d">8</span></span>
<div style="left:184px;top:258px;width:129px;height:292px;border:3px solid #3a8a22"></div><div style="left:308px;top:544px;width:8px;height:8px;background:#3a8a22;border:1px solid #fff"></div>
<div style="left:957px;top:141.500px;width:212.800px;height:351.500px;border-radius:8px;background:#fff;box-shadow:0 6px 18px rgba(0,0,0,.13),0 0 0 1px rgba(40,50,80,.12)"><div style="left:8px;top:271px;width:197px;height:31.500px;border-radius:5px;background:#f0f0f0"></div><div style="left:16px;top:80.5px;width:181px;height:1px;background:#e3e3e3"></div><div style="left:16px;top:193.5px;width:181px;height:1px;background:#e3e3e3"></div><div style="left:16px;top:306.5px;width:181px;height:1px;background:#e3e3e3"></div><span class="t mi" style="top:18.2px">突出显示单元格规则(H)</span><svg style="left:188.500px;top:18.8px" width="6" height="10"><path d="M1 0.800 L5 5 L1 9.200" fill="none" stroke="#555" stroke-width="1.1" stroke-linecap="round" stroke-linejoin="round"/></svg><span class="t mi" style="top:54.2px">项目选取规则(T)</span><svg style="left:188.500px;top:54.8px" width="6" height="10"><path d="M1 0.800 L5 5 L1 9.200" fill="none" stroke="#555" stroke-width="1.1" stroke-linecap="round" stroke-linejoin="round"/></svg><span class="t mi" style="top:95.2px">数据条(D)</span><svg style="left:188.500px;top:95.8px" width="6" height="10"><path d="M1 0.800 L5 5 L1 9.200" fill="none" stroke="#555" stroke-width="1.1" stroke-linecap="round" stroke-linejoin="round"/></svg><span class="t mi" style="top:131.2px">色阶(S)</span><svg style="left:188.500px;top:131.8px" width="6" height="10"><path d="M1 0.800 L5 5 L1 9.200" fill="none" stroke="#555" stroke-width="1.1" stroke-linecap="round" stroke-linejoin="round"/></svg><span class="t mi" style="top:167.2px">图标集(I)</span><svg style="left:188.500px;top:167.8px" width="6" height="10"><path d="M1 0.800 L5 5 L1 9.200" fill="none" stroke="#555" stroke-width="1.1" stroke-linecap="round" stroke-linejoin="round"/></svg><span class="t mi" style="top:208.2px">新建规则(N)...</span><span class="t mi" style="top:244.2px">清除规则(C)</span><svg style="left:188.500px;top:244.8px" width="6" height="10"><path d="M1 0.800 L5 5 L1 9.200" fill="none" stroke="#555" stroke-width="1.1" stroke-linecap="round" stroke-linejoin="round"/></svg><span class="t mi" style="top:280.2px">管理规则(R)...</span><span class="t mi" style="top:321.2px">AI 条件格式(A)...</span></div>
<svg style="left:0;top:0" width="1237" height="500" viewBox="0 0 1237 500" stroke-linecap="round" stroke-linejoin="round"><path d="M976 159.300 V172.500 M986.300 159.300 V166 M973 163.300 H988.500 M973 169.800 H979.800" stroke="#333" stroke-width="1.0" fill="none"/><path d="M981.200 169.400 H988 M981.200 171.900 H988 M986.200 167.300 L983.200 174" stroke="#2b5fd9" stroke-width="1.0" fill="none"/><path d="M979.800 208.800 H975.200 A1.200 1.200 0 0 1 974 207.600 V196.500 A1.200 1.200 0 0 1 975.200 195.300 H987 A1.200 1.200 0 0 1 988.200 196.500 V200.300" stroke="#333" stroke-width="1.0" fill="none"/><path d="M978.500 206 V198.700 M976.500 200.700 L978.500 198.700 L980.500 200.700" stroke="#2b5fd9" stroke-width="1.0" fill="none"/><text x="981.300" y="208.500" font-size="7.800" font-family="Liberation Sans,sans-serif" fill="#2b5fd9" textLength="7.800" lengthAdjust="spacingAndGlyphs">10</text><path d="M975.600 235.500 H973.700 V250.500 H975.600 M986.400 235.500 H988.300 V250.500 H986.400 M973.700 240.300 H975 M973.700 245.700 H975 M987 240.300 H988.300 M987 245.700 H988.300" stroke="#333" stroke-width="1.0" fill="none"/><path d="M978.200 235.900 H984 A.8 .8 0 0 1 984.800 236.700 V243.200 H977.400 V236.700 A.8 .8 0 0 1 978.200 235.900 Z M977.400 243.200 H984.800 V249.300 A.8 .8 0 0 1 984 250.100 H978.200 A.8 .8 0 0 1 977.400 249.300 Z" stroke="#2b5fd9" stroke-width="1.0" fill="none"/><path d="M980.400 271.900 H986.300 A1 1 0 0 1 987.300 272.900 V285.300 A1 1 0 0 1 986.300 286.300 H974.700 A1 1 0 0 1 973.700 285.300 V276.600 M973.700 276.600 H987.300 M973.700 281.500 H987.300 M980.400 271.900 V286.300" stroke="#333" stroke-width="1.0" fill="none"/><path d="M980.400 276.600 H973.700 V272.900 A1 1 0 0 1 974.700 271.900 H980.400 Z" stroke="#2b5fd9" stroke-width="1.0" fill="none"/><path d="M975 308.900 H987 A1.300 1.300 0 0 1 988.300 310.200 V320.600 A1.300 1.300 0 0 1 987 321.900 H975 A1.300 1.300 0 0 1 973.700 320.600 V310.200 A1.300 1.300 0 0 1 975 308.900 Z M979.200 312.700 A1.600 1.600 0 1 1 976 312.700 A1.600 1.600 0 1 1 979.200 312.700 Z M981.300 312.700 H986" stroke="#333" stroke-width="1.0" fill="none"/><path d="M977.600 316.400 L979.600 318.400 L977.600 320.400 L975.600 318.400 Z M981.300 318.400 H986" stroke="#2b5fd9" stroke-width="1.0" fill="none"/><path d="M981.500 363.4 H974.700 A1 1 0 0 1 973.700 362.4 V350 A1 1 0 0 1 974.700 349 H987 A1 1 0 0 1 988 350 V356 M973.700 354 H988 M973.700 358.8 H981.500 M979.700 349 V363.4" stroke="#333" stroke-width="1.0" fill="none"/><path d="M985.400 358 V364.200 M982.300 361.100 H988.500" stroke="#1f9d67" stroke-width="1.1" fill="none"/><path d="M981.500 399.4 H974.700 A1 1 0 0 1 973.700 398.4 V386 A1 1 0 0 1 974.700 385 H987 A1 1 0 0 1 988 386 V392 M973.700 390 H988 M973.700 394.8 H981.500 M979.700 385 V399.4" stroke="#333" stroke-width="1.0" fill="none"/><path d="M985.300 392.400 L988.900 395.700 L984.600 399.700 H981.800 L980 398 Z M982.700 395 L986 398.300" stroke="#e0334a" stroke-width="1.0" fill="none"/><path d="M981.500 435.09999999999997 H974.700 A1 1 0 0 1 973.700 434.09999999999997 V421.7 A1 1 0 0 1 974.700 420.7 H987 A1 1 0 0 1 988 421.7 V427.7 M973.700 425.7 H988 M973.700 430.5 H981.500 M979.700 420.7 V435.09999999999997" stroke="#333" stroke-width="1.0" fill="none"/><path d="M984.800 427.300 L988.300 429.300 V433.400 L984.800 435.400 L981.300 433.400 V429.300 Z" stroke="#2b5fd9" stroke-width="1.0" fill="none"/><path d="M986 431.400 A1.200 1.200 0 1 1 983.600 431.400 A1.200 1.200 0 1 1 986 431.400 Z" stroke="#2b5fd9" stroke-width="1" fill="#2b5fd9"/></svg><svg style="left:973px;top:463px" width="16" height="11.500" viewBox="0 0 18 14" preserveAspectRatio="none"><defs><linearGradient id="ai1" x1="0" y1="1" x2="1" y2="0"><stop offset="0" stop-color="#2f7bff"/><stop offset="1" stop-color="#8a4dff"/></linearGradient><linearGradient id="ai2" x1="0" y1="0" x2="1" y2="1"><stop offset="0" stop-color="#ff4d9a"/><stop offset="1" stop-color="#ff8a5c"/></linearGradient></defs><path d="M7 0.500 H11.200 L5.400 13.500 H0.600 Z" fill="url(#ai1)"/><path d="M8.400 6.200 L11.600 5.200 L17.400 13.500 H12.600 Z" fill="url(#ai2)"/></svg>
<svg style="left:790px;top:420px;filter:drop-shadow(1.500px 2px 1.500px rgba(0,0,0,.45))" width="190" height="70"><path d="M11.500 54 L153 19 L151.800 15.200 L178.600 15.500 L154.200 27.800 L154.900 24.400 L12.200 56.600 A1.400 1.400 0 0 1 11.500 54 Z" fill="#fb0d0d"/></svg>
<svg style="left:1075px;top:698px" width="162" height="54" viewBox="0 0 162 54"><defs><linearGradient id="wg1" x1="0" y1="1" x2="1" y2="0"><stop offset="0" stop-color="#5a8edb"/><stop offset="1" stop-color="#5ab8ee"/></linearGradient><linearGradient id="wg2" x1="0" y1="1" x2="1" y2="0"><stop offset="0" stop-color="#e6e23c"/><stop offset=".5" stop-color="#8fd04e"/><stop offset="1" stop-color="#4cbf74"/></linearGradient></defs><path d="M46 3.800 C30 5 8 12 3 24 C0.500 32 6 37.500 14 37.800 C19 38 23 36.500 24.500 34 C17 35.500 11.500 32 12.500 26 C14 17 32 9 46 3.800Z" fill="url(#wg1)" opacity=".9"/><path d="M5.500 43.500 C20 44.500 39 39 43 27 C45 20.500 41.500 17.500 36 17.500 C40 20 39 25.500 34 30.500 C27 37.500 14 41.500 5.500 43.500Z" fill="url(#wg2)" opacity=".9"/><path d="M30 21 C24 19 16 22 15.500 27.500 C15.200 31.500 20 33.500 24 31.500 C20.500 31.500 18.500 29.500 19 27 C19.800 23.500 25 21.500 30 21Z" fill="#6aa0e2" opacity=".85"/><path d="M40 7.500 C27 10 12 17 9.500 25.500" fill="none" stroke="#fff" stroke-width="1" opacity=".75"/><path d="M9 41 C22 40 35 34 38.500 25" fill="none" stroke="#fff" stroke-width=".9" opacity=".6"/><text x="45.500" y="24" font-family="Liberation Sans,Noto Sans CJK SC,sans-serif" font-weight="bold" font-size="21" fill="#5b95d8" opacity=".86">极光下载站</text><text x="46.500" y="42.600" font-family="Liberation Sans,sans-serif" font-size="16.900" fill="#5cc07a" opacity=".86">www.xz7.com</text></svg>
</body></html>
